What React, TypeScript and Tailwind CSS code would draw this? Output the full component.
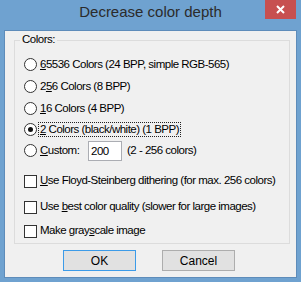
import React from 'react'

const font = { fontFamily: '"Liberation Sans", Arial, sans-serif' }

function Radio({ checked }: { checked?: boolean }) {
  return (
    <span className="w-[13px] h-[13px] shrink-0 rounded-full border border-[#333] bg-white flex items-center justify-center">
      {checked && <span className="w-[5px] h-[5px] rounded-full bg-[#111]" />}
    </span>
  )
}

function Check() {
  return <span className="w-[13px] h-[13px] shrink-0 border border-[#333] bg-white" />
}

export default function App() {
  const radios = [
    { pre: '', key: '6', post: '5536 Colors (24 BPP, simple RGB-565)', h: 'h-[21px]' },
    { pre: '2', key: '5', post: '6 Colors (8 BPP)', h: 'h-[22px]' },
    { pre: '', key: '1', post: '6 Colors (4 BPP)', h: 'h-[22px]' },
  ]

  return (
    <div className="w-[301px] h-[282px] bg-[#6fa2d0] flex flex-col text-[11.5px] tracking-[-0.5px] text-black" style={font}>
      {/* title bar */}
      <div className="relative h-[30px] shrink-0">
        <div className="h-[24px] leading-[24px] text-center text-[15px] tracking-normal text-[#2b2b2b]">
          Decrease color depth
        </div>
        <div className="absolute right-[5px] top-0 w-[31px] h-[19px] bg-[#c75050] flex items-center justify-center">
          <svg width="9" height="9" viewBox="0 0 9 9">
            <path d="M1 1 L8 8 M8 1 L1 8" stroke="white" strokeWidth="2" />
          </svg>
        </div>
      </div>

      {/* client */}
      <div className="mx-[4px] mb-[4px] flex-1 bg-[#f0f0f0] border border-[#5e8cba] flex flex-col">
        <div className="mt-[9px] ml-[9px] w-[276px] h-[204px] border border-[#dcdcdc] flex flex-col">
          <div className="-mt-[8px] ml-[5px] h-[13px] leading-[13px] px-[2px] bg-[#f0f0f0] w-fit">Colors:</div>

          <div className="mt-[8px] pl-[9px] flex flex-col">
            {radios.map((r, i) => (
              <div key={i} className={`${r.h} flex items-center gap-[3px]`}>
                <Radio />
                <span className="leading-[13px]">
                  {r.pre}<u>{r.key}</u>{r.post}
                </span>
              </div>
            ))}
            <div className="h-[21px] flex items-center gap-[2px]">
              <Radio checked />
              <span className="leading-[13px] px-[1px] outline-1 outline-dotted outline-[#222]">
                <u>2</u> Colors (black/white) (1 BPP)
              </span>
            </div>
            <div className="h-[21px] flex items-center gap-[3px]">
              <Radio />
              <span className="w-[45px] leading-[13px]">
                <u>C</u>ustom:
              </span>
              <div className="w-[34px] h-[20px] border border-[#abadb3] bg-white pl-[2px] leading-[18px]">200</div>
              <span className="ml-[2px] leading-[13px]">(2 - 256 colors)</span>
            </div>
          </div>

          <div className="mt-[7px] pl-[9px] flex flex-col">
            <div className="h-[26px] flex items-center gap-[3px]">
              <Check />
              <span><u>U</u>se Floyd-Steinberg dithering (for max. 256 colors)</span>
            </div>
            <div className="h-[26px] flex items-center gap-[3px]">
              <Check />
              <span>Use <u>b</u>est color quality (slower for large images)</span>
            </div>
            <div className="h-[22px] flex items-center gap-[3px]">
              <Check />
              <span>Make gray<u>s</u>cale image</span>
            </div>
          </div>
        </div>

        <div className="mt-[6px] flex justify-center gap-[26px] pr-[3px]">
          <button className="w-[73px] h-[21px] bg-[#e1e1e1] border border-[#3c9be8] tracking-normal text-[12px]">OK</button>
          <button className="w-[73px] h-[21px] bg-[#e1e1e1] border border-[#adadad] tracking-normal text-[12px]">Cancel</button>
        </div>
      </div>
    </div>
  )
}
